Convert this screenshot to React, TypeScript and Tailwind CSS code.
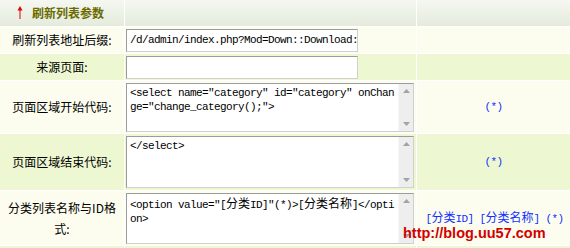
import React from "react";

const CJK = "font-['Noto_Sans_CJK_SC',sans-serif]";
const MONO = "font-['Liberation_Mono','Noto_Sans_CJK_SC',monospace] text-[11px] tracking-[-0.6px]";

function Cj({ children }: { children: React.ReactNode }) {
  return <span className={`${CJK} text-[12px] tracking-normal`}>{children}</span>;
}

function ScrollBar() {
  return (
    <div className="w-[15px] shrink-0 bg-[#eeeeee] border-l border-[#f7f7f7] flex flex-col justify-between items-center py-[5px]">
      <svg width="7" height="4" viewBox="0 0 7 4">
        <polygon points="0,4 7,4 3.5,0" fill="#a3a3a3" />
      </svg>
      <svg width="7" height="4" viewBox="0 0 7 4">
        <polygon points="0,0 7,0 3.5,4" fill="#a3a3a3" />
      </svg>
    </div>
  );
}

function Area({ h, lines }: { h: string; lines: React.ReactNode[] }) {
  return (
    <div
      className={`${h} w-[288px] flex bg-white border border-t-[#9c9c9c] border-l-[#9c9c9c] border-r-[#d0d0d0] border-b-[#d0d0d0]`}
    >
      <div className={`flex-1 pl-[3px] pt-[2px] ${MONO} leading-[14px] text-black whitespace-pre`}>
        {lines.map((l, i) => (
          <div key={i}>{l}</div>
        ))}
      </div>
      <ScrollBar />
    </div>
  );
}

function Input({ value }: { value?: string }) {
  return (
    <div className="w-[232px] h-[23px] bg-white border border-t-[#9c9c9c] border-l-[#9c9c9c] border-r-[#d0d0d0] border-b-[#d0d0d0] flex items-center pl-[3px]">
      <span className={`${MONO} whitespace-pre`}>{value}</span>
    </div>
  );
}

export default function App() {
  const cream = "bg-[#fcfdef]";
  const green = "bg-[#edf8d2]";
  const label = `flex items-center justify-center text-center ${CJK} text-[12px] text-black`;
  const blue = `flex items-center justify-center ${MONO} text-[#1030ff] whitespace-pre`;
  const head = "bg-gradient-to-b from-[#f5f7f1] to-[#e4ebdc]";
  return (
    <div className="relative w-[570px] h-[248px] overflow-hidden bg-white">
      <div className="grid grid-cols-[124px_291px_153px] grid-rows-[26px_26px_26px_52px_56px_54px_10px] gap-px">
        {/* header */}
        <div className={`${head} flex items-center pl-[17px]`}>
          <svg width="6" height="13" viewBox="0 0 6 13" className="mb-[1px]">
            <line x1="3" y1="2" x2="3" y2="13" stroke="#e00000" strokeWidth="1" />
            <polygon points="0.5,4.5 5.5,4.5 3,0" fill="#e00000" />
          </svg>
          <span className={`ml-[9px] ${CJK} text-[12px] font-bold text-[#6a6a00]`}>刷新列表参数</span>
        </div>
        <div className={head} />
        <div className={head} />

        {/* row 1 */}
        <div className={`${cream} ${label}`}>刷新列表地址后缀:</div>
        <div className={`${cream} flex items-center pl-px`}>
          <Input value="/d/admin/index.php?Mod=Down::Download:" />
        </div>
        <div className={cream} />

        {/* row 2 */}
        <div className={`${green} ${label}`}>来源页面:</div>
        <div className={`${green} flex items-center pl-px`}>
          <Input />
        </div>
        <div className={green} />

        {/* row 3 */}
        <div className={`${cream} ${label}`}>页面区域开始代码:</div>
        <div className={`${cream} flex items-start pl-px pt-[2px]`}>
          <Area
            h="h-[49px]"
            lines={['<select name="category" id="category" onChan', 'ge="change_category();">']}
          />
        </div>
        <div className={`${cream} ${blue}`}>(*)</div>

        {/* row 4 */}
        <div className={`${green} ${label}`}>页面区域结束代码:</div>
        <div className={`${green} flex items-start pl-px pt-[2px]`}>
          <Area h="h-[52px]" lines={["</select>"]} />
        </div>
        <div className={`${green} ${blue}`}>(*)</div>

        {/* row 5 */}
        <div className={`${cream} ${label} leading-[21px] px-[2px]`}>
          分类列表名称与ID格
          <br />
          式:
        </div>
        <div className={`${cream} flex items-start pl-px pt-[2px]`}>
          <Area
            h="h-[51px]"
            lines={[
              <>
                {'<option value="['}
                <Cj>分类</Cj>
                {'ID]"(*)>['}
                <Cj>分类名称</Cj>
                {"]</opti"}
              </>,
              "on>",
            ]}
          />
        </div>
        <div className={`${cream} ${blue} pl-[2px]`}>
          <span>
            {"["}
            <Cj>分类</Cj>
            {"ID] ["}
            <Cj>分类名称</Cj>
            {"] (*)"}
          </span>
        </div>

        {/* row 6 (partial) */}
        <div className={green} />
        <div className={green} />
        <div className={green} />
      </div>

      {/* watermark */}
      <div className="absolute left-[403px] top-[224px] font-['Liberation_Sans',Arial,sans-serif] font-bold text-[14.5px] leading-[18px] text-[#d20000]">
        http://blog.uu57.com
      </div>
    </div>
  );
}
